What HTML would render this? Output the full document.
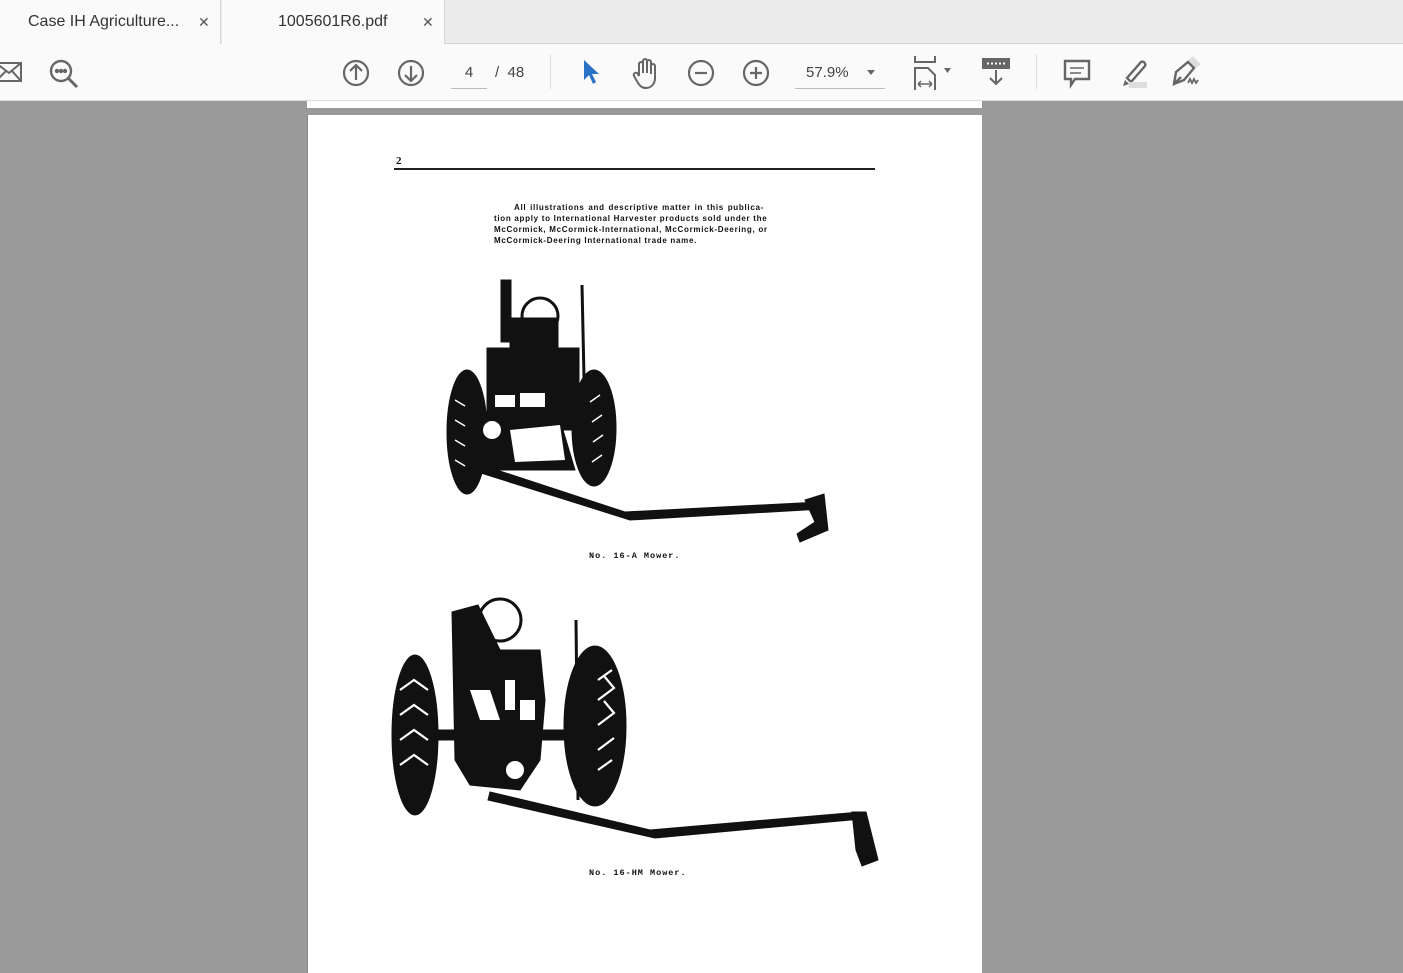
<!DOCTYPE html>
<html><head><meta charset="utf-8"><style>
*{margin:0;padding:0;box-sizing:border-box}
body{width:1403px;height:973px;overflow:hidden;background:#9a9a9a;font-family:"Liberation Sans",sans-serif;position:relative}
.tabs{position:absolute;left:0;top:0;width:1403px;height:44px;background:#ebebeb;border-bottom:1px solid #d4d4d4}
.tab{position:absolute;top:0;height:44px;background:#fafafa;font-size:16px;color:#333;line-height:44px}
.x{position:absolute;font-size:14px;color:#555}
.tb{position:absolute;left:0;top:44px;width:1403px;height:57px;background:#fafafa;border-bottom:1px solid #dcdcdc}
svg.i{position:absolute}
.page{position:absolute;left:307px;top:101px;width:675px;height:872px;background:#fff;border-left:1px solid #888}
.txt{position:absolute;font-family:"Liberation Sans",sans-serif;font-weight:bold;color:#111}
.p span{display:block;text-align:justify;text-align-last:justify;height:11px;white-space:nowrap}
</style></head><body>
<div class="tabs">
 <div class="tab" style="left:0;width:221px;border-right:1px solid #d4d4d4"><span style="position:absolute;left:28px">Case IH Agriculture...</span><span class="x" style="left:198px">✕</span></div>
 <div class="tab" style="left:222px;width:223px;border-right:1px solid #d4d4d4"><span style="position:absolute;left:56px">1005601R6.pdf</span><span class="x" style="left:200px">✕</span></div>
</div>
<div class="tb">
 <svg class="i" style="left:0;top:14px" width="24" height="28" viewBox="0 0 24 28" fill="none" stroke="#666" stroke-width="2"><rect x="-4" y="5" width="25" height="18"/><path d="M-4 5 L9 15 L21 5 M-4 23 L6 13 M21 23 L12 13"/></svg>
 <svg class="i" style="left:48px;top:14px" width="32" height="32" viewBox="0 0 32 32" fill="none" stroke="#666" stroke-width="2.4"><circle cx="13" cy="13" r="10"/><path d="M20 20 L29 29" stroke-width="3"/><circle cx="9" cy="13" r="1" fill="#666"/><circle cx="13" cy="13" r="1" fill="#666"/><circle cx="17" cy="13" r="1" fill="#666"/></svg>
 <svg class="i" style="left:341px;top:14px" width="30" height="30" viewBox="0 0 30 30" fill="none" stroke="#666" stroke-width="2.2"><circle cx="15" cy="15" r="12"/><path d="M15 22 V8 M9 13 L15 7 L21 13"/></svg>
 <svg class="i" style="left:396px;top:14px" width="30" height="30" viewBox="0 0 30 30" fill="none" stroke="#666" stroke-width="2.2"><circle cx="15" cy="15" r="12"/><path d="M15 8 V22 M9 17 L15 23 L21 17"/></svg>
 <div style="position:absolute;left:451px;top:20px;width:36px;height:25px;border-bottom:1px solid #bbb;text-align:center;font-size:15px;color:#444">4</div>
 <div style="position:absolute;left:495px;top:20px;font-size:15px;color:#444">/&nbsp; 48</div>
 <div style="position:absolute;left:550px;top:10px;width:1px;height:35px;background:#ddd"></div>
 <svg class="i" style="left:580px;top:14px" width="24" height="30" viewBox="0 0 24 30"><path d="M4 2 L4 22 L9 17 L13 26 L16 24 L12 16 L19 16 Z" fill="#2a72c8"/></svg>
 <svg class="i" style="left:630px;top:12px" width="32" height="34" viewBox="0 0 32 34" fill="none" stroke="#666" stroke-width="2"><path d="M9 20 V8 a2 2 0 0 1 4 0 V17 M13 17 V5 a2 2 0 0 1 4 0 V17 M17 17 V6 a2 2 0 0 1 4 0 V18 M21 18 V10 a2 2 0 0 1 4 0 V22 c0 6 -4 10 -9 10 c-4 0 -6 -2 -8 -5 L4 20 a2 2 0 0 1 4 -2 L9 20"/></svg>
 <svg class="i" style="left:686px;top:14px" width="30" height="30" viewBox="0 0 30 30" fill="none" stroke="#666" stroke-width="2.2"><circle cx="15" cy="15" r="12"/><path d="M9 15 H21"/></svg>
 <svg class="i" style="left:741px;top:14px" width="30" height="30" viewBox="0 0 30 30" fill="none" stroke="#666" stroke-width="2.2"><circle cx="15" cy="15" r="12"/><path d="M9 15 H21 M15 9 V21"/></svg>
 <div style="position:absolute;left:795px;top:20px;width:90px;height:25px;border-bottom:1px solid #bbb;font-size:15px;color:#444;padding-left:11px">57.9%</div>
 <div style="position:absolute;left:867px;top:26px;width:0;height:0;border-left:4px solid transparent;border-right:4px solid transparent;border-top:5px solid #666"></div>
 <svg class="i" style="left:910px;top:10px" width="48" height="36" viewBox="0 0 48 36" fill="none" stroke="#666" stroke-width="2"><path d="M5 2 V8 H25 V2"/><path d="M5 36 V14 H18 L25 21 V36"/><path d="M8 30 H22 M8 30 L11 27 M8 30 L11 33 M22 30 L19 27 M22 30 L19 33" stroke-width="1.5"/><path d="M34 14 L41 14 L37.5 19Z" fill="#666" stroke="none"/></svg>
 <svg class="i" style="left:980px;top:12px" width="32" height="32" viewBox="0 0 32 32" fill="none" stroke="#666" stroke-width="2"><rect x="3" y="3" width="26" height="9" fill="#666"/><path d="M7 7.5 H25" stroke="#fff" stroke-dasharray="2 2"/><path d="M16 14 V28 M10 22 L16 28 L22 22"/></svg>
 <div style="position:absolute;left:1036px;top:10px;width:1px;height:35px;background:#ddd"></div>
 <svg class="i" style="left:1062px;top:14px" width="30" height="32" viewBox="0 0 30 32" fill="none" stroke="#666" stroke-width="2.4"><path d="M3 3 H27 V21 H13 L9 27 V21 H3 Z"/><path d="M8 10 H22 M8 15 H19" stroke-width="1.6"/></svg>
 <svg class="i" style="left:1115px;top:12px" width="34" height="34" viewBox="0 0 34 34"><path d="M12 22 L26 6 a3 3 0 0 1 4 4 L16 26 Z" fill="none" stroke="#666" stroke-width="2.4"/><path d="M10 24 L14 28 L8 30 Z" fill="#666"/><rect x="14" y="26" width="18" height="6" fill="#ddd"/></svg>
 <svg class="i" style="left:1168px;top:12px" width="36" height="34" viewBox="0 0 36 34" fill="none" stroke="#666" stroke-width="2.4"><path d="M6 28 L8 16 L20 6 L26 12 L16 24 Z"/><path d="M6 28 L13 21"/><path d="M21 5 L25 2 L31 8 L27 11" fill="#ddd" stroke="#ddd"/><path d="M20 27 l2 -4 l2 4 l2 -4 l2 4 l2 -3" stroke-width="1.8"/></svg>
</div>
<div style="position:absolute;left:307px;top:101px;width:675px;height:7px;background:#fff"></div>
<div style="position:absolute;left:307px;top:108px;width:675px;height:7px;background:#9a9a9a"></div>
<div class="page" style="top:115px;height:858px"></div>

<div class="txt" style="left:396px;top:155px;font-size:11px;font-family:'Liberation Serif',serif">2</div>
<div style="position:absolute;left:394px;top:168px;width:481px;height:2px;background:#222"></div>
<div class="txt p" style="left:494px;top:202px;width:270px;font-size:8px;line-height:11px;font-weight:900;letter-spacing:0.7px">
<span style="padding-left:20px">All illustrations and descriptive matter in this publica-</span>
<span>tion apply to International Harvester products sold under the</span>
<span>McCormick, McCormick-International, McCormick-Deering, or</span>
<span style="text-align-last:left">McCormick-Deering International trade name.</span>
</div>
<div class="txt" style="left:589px;top:551px;font-size:8.5px;font-family:'Liberation Mono',monospace;letter-spacing:1px">No. 16-A Mower.</div>
<div class="txt" style="left:589px;top:868px;font-size:8.5px;font-family:'Liberation Mono',monospace;letter-spacing:1px">No. 16-HM Mower.</div>

<svg style="position:absolute;left:0;top:0" width="1403" height="973" viewBox="0 0 1403 973">
 <g fill="#111" stroke="#111">
  <ellipse cx="467" cy="432" rx="20" ry="62"/>
  <ellipse cx="594" cy="428" rx="22" ry="58"/>
  <rect x="487" y="348" width="92" height="82"/>
  <path d="M480 420 L560 420 L575 470 L485 470Z"/>
  <rect x="501" y="280" width="10" height="62"/>
  <circle cx="540" cy="316" r="18" fill="none" stroke-width="3"/>
  <rect x="510" y="318" width="48" height="30"/>
  <path d="M582 285 L586 470" stroke-width="3" fill="none"/>
  <path d="M460 458 L625 512 L820 502 L822 509 L630 520 L465 468Z"/>
  <path d="M805 500 L824 494 L828 530 L800 542 L797 534 L815 522Z"/>
 </g>
 <g fill="#fff" stroke="none">
  <rect x="495" y="395" width="20" height="12"/><rect x="520" y="393" width="25" height="14"/>
  <path d="M510 430 L560 425 L565 460 L515 462Z"/>
  <circle cx="492" cy="430" r="9"/>
 </g>
 <g stroke="#fff" stroke-width="1.5" fill="none">
  <path d="M455 400 l10 6 M455 420 l10 6 M455 440 l10 6 M455 460 l10 6 M600 395 l-10 7 M602 415 l-10 7 M603 435 l-10 7 M602 455 l-10 7"/>
 </g>
 <g fill="#111" stroke="#111">
  <ellipse cx="415" cy="735" rx="23" ry="80"/>
  <ellipse cx="595" cy="726" rx="31" ry="80"/>
  <rect x="394" y="730" width="178" height="10"/>
  <path d="M452 612 L478 605 L500 650 L540 650 L545 700 L540 760 L520 790 L470 785 L455 760 Z"/>
  <circle cx="500" cy="620" r="21" fill="none" stroke-width="3"/>
  <path d="M465 655 L540 652 L536 666 L470 668Z"/>
  <path d="M576 620 L578 800" stroke-width="3" fill="none"/>
  <path d="M490 792 L650 830 L860 812 L861 819 L655 838 L488 800Z"/>
  <path d="M852 812 L866 812 L878 860 L862 866 L856 850Z"/>
 </g>
 <g fill="#fff" stroke="none">
  <path d="M470 690 L490 690 L500 720 L480 720Z"/><rect x="505" y="680" width="10" height="30"/><rect x="520" y="700" width="15" height="20"/>
  <circle cx="515" cy="770" r="9"/>
 </g>
 <g stroke="#fff" stroke-width="2.2" fill="none">
  <path d="M400 690 l14 -10 l14 10 M400 715 l14 -10 l14 10 M400 740 l14 -10 l14 10 M400 765 l14 -10 l14 10"/>
  <path d="M598 680 l14 -10 M598 700 l16 -12 l-10 -12 M598 725 l16 -12 l-10 -12 M598 750 l16 -12 M598 770 l14 -10"/>
 </g>
</svg>
</body></html>
